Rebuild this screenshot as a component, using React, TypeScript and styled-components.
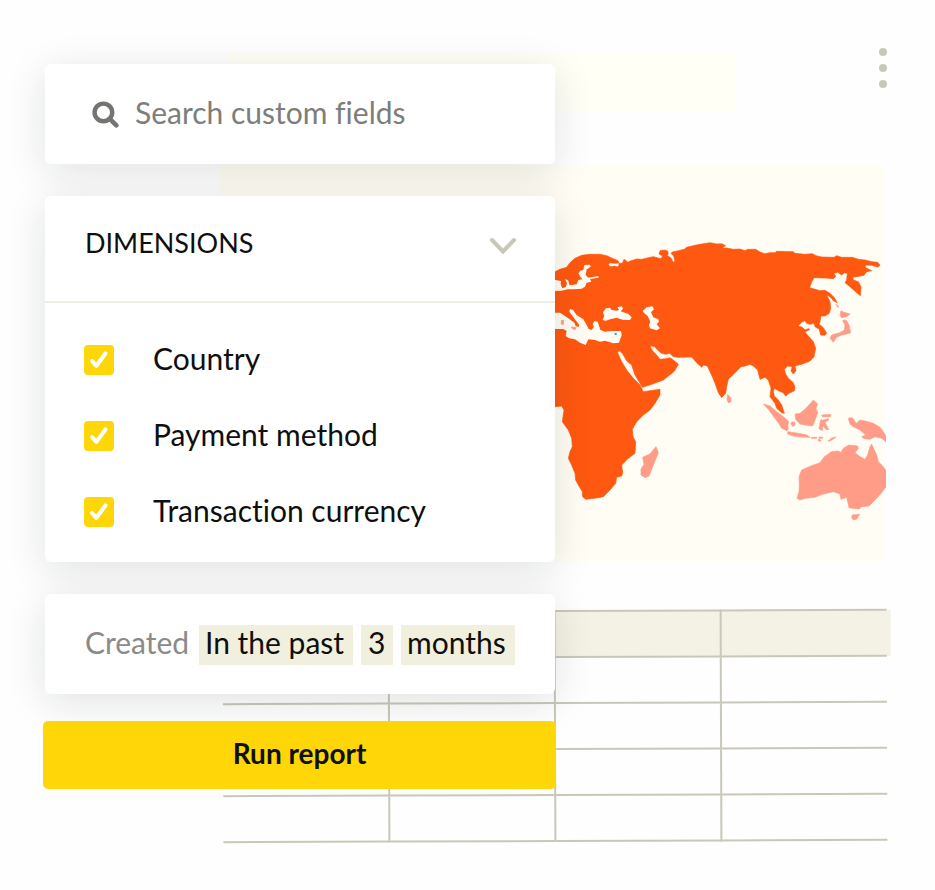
import React, { useState } from "react";
import styled, { createGlobalStyle } from "styled-components";

const colors = {
  ink: "#0f0f0f",
  muted: "#7d7d7a",
  line: "#c9c8b8",
  sand: "#f1efdd",
  header: "#f4f2e4",
  cream: "#fffdf4",
  yellow: "#ffd608",
  orange: "#ff5810",
  pink: "#ff9c88",
};

const GlobalStyle = createGlobalStyle`
  *, *::before, *::after { box-sizing: border-box; }
  body {
    margin: 0;
    background: #fefefe;
    color: ${colors.ink};
    font-family: Lato, "Liberation Sans", sans-serif;
    font-size: 30px;
    font-variant-ligatures: none;
    line-height: 40px;
  }
  button, input, select { font: inherit; font-variant-ligatures: none; color: inherit; }
`;

const Stage = styled.main`
  display: grid;
  grid-template-columns: minmax(0, 1fr);
  align-items: start;
`;

const Report = styled.section`
  grid-area: 1 / 1;
  padding: 48px 48px 48px 220px;
`;

const ReportHeader = styled.header`
  display: flex;
  justify-content: space-between;
  align-items: flex-start;
  gap: 24px;
  padding-left: 8px;
  margin-bottom: 54px;
`;

const TitlePlaceholder = styled.div`
  flex: 0 1 508px;
  height: 60px;
  margin-top: 3px;
  background: #fffff6;
`;

const IconButton = styled.button`
  display: flex;
  padding: 0;
  border: 0;
  background: none;
  cursor: pointer;
`;

const MapFrame = styled.figure`
  margin: 0 3px 49px 0;
  background: ${colors.cream};
`;

const MapDrawing = styled.svg`
  display: block;
  width: calc(100% + 2px);
  height: 396px;
`;

const ReportTable = styled.table`
  width: 100%;
  table-layout: fixed;
  border-collapse: collapse;
  transform: rotate(-0.2deg);
`;

const TableWrap = styled.div`
  padding-left: 3px;
`;

const cellBorders = `
  height: 46px;
  padding: 0;
  border: 2px solid ${colors.line};
  &:first-child { border-left: 0; }
  &:last-child { border-right: 0; }
`;

const HeadCell = styled.th`
  ${cellBorders}
  background: ${colors.header};
  &:last-child { box-shadow: 4px 0 0 ${colors.header}; }
`;

const Cell = styled.td`
  ${cellBorders}
`;

const Filters = styled.form`
  grid-area: 1 / 1;
  z-index: 1;
  display: flex;
  flex-direction: column;
  gap: 32px;
  width: 100%;
  max-width: 600px;
  padding: 64px 45px 48px;
`;

const Card = styled.section`
  border-radius: 6px;
  background: #fff;
  box-shadow: 0 8px 40px rgba(20, 24, 24, 0.12);
`;

const SearchCard = styled(Card)`
  display: flex;
  align-items: center;
  gap: 16px;
  height: 100px;
  padding: 0 40px 0 47px;
`;

const SearchInput = styled.input`
  flex: 1;
  min-width: 0;
  padding: 0 0 4px;
  border: 0;
  outline: 0;
  background: none;
  &::placeholder { color: ${colors.muted}; opacity: 1; }
`;

const GroupHeader = styled.header`
  display: flex;
  justify-content: space-between;
  align-items: center;
  height: 107px;
  padding: 0 38px 12px 40px;
  border-bottom: 2px solid #efeee4;
`;

const GroupTitle = styled.h2`
  margin: 0;
  font-size: 27px;
  font-weight: 400;
`;

const OptionList = styled.div`
  display: flex;
  flex-direction: column;
  gap: 36px;
  padding: 35px 39px 32px;
`;

const Option = styled.label`
  display: flex;
  align-items: center;
  gap: 39px;
  cursor: pointer;
`;

const BoxWrap = styled.span`
  display: grid;
  place-items: center;
  margin-top: 4px;
  > * { grid-area: 1 / 1; }
  > svg { pointer-events: none; }
`;

const CheckBox = styled.input`
  appearance: none;
  width: 30px;
  height: 30px;
  margin: 0;
  border-radius: 4px;
  border: 2px solid ${colors.yellow};
  &:checked { background: ${colors.yellow}; }
`;

const RangeCard = styled(Card)`
  display: flex;
  align-items: center;
  gap: 8px;
  height: 100px;
  padding: 2px 40px 0;
`;

const RangeLabel = styled.span`
  width: 106px;
  padding-bottom: 6px;
  color: #8a8a87;
`;

const chip = `
  height: 40px;
  margin: 0;
  border: 0;
  border-radius: 0;
  background: ${colors.sand};
  line-height: 34px;
`;

const ChipSelect = styled.select<{ $grow: number }>`
  ${chip}
  appearance: none;
  flex: ${(p) => p.$grow} 1 0;
  min-width: 0;
  padding: 0 6px 6px;
`;

const ChipInput = styled.input`
  ${chip}
  width: 32px;
  padding: 0 7px 6px;
`;

const RunButton = styled.button`
  height: 68px;
  margin: -5px -1px 0 -2px;
  padding: 0 0 4px;
  border: 0;
  border-radius: 5px;
  background: ${colors.yellow};
  font-size: 28px;
  font-weight: 700;
  cursor: pointer;
`;

const mainland =
  "M-60 128L30 125 45 118 65 112 75 98 90 85 110 76 135 73 165 73 185 77 200 84 219 92 222 99 207 100 195 98 190 103 195 110 210 108 216 111 222 107 222 100 232 100 237 88 245 93 248 97 256 93 275 87 290 88 310 83 325 80 340 84 348 86 353 78 342 72 345 62 358 60 368 63 370 72 366 76 378 84 384 97 390 92 386 78 378 70 382 66 400 62 418 58 425 52 450 46 470 42 495 38 515 42 530 41 542 47 536 51 531 55 545 54 565 58 585 57 600 62 608 58 632 58 645 66 658 71 675 68 690 68 695 64 745 65 750 70 780 73 802 71 813 77 830 81 867 82 875 77 890 82 922 82 940 88 960 90 980 95 998 97 1005 106 998 111 980 106 962 105 960 112 980 122 965 125 957 136 945 138 935 140 923 142 925 150 940 155 948 170 946 197 935 188 915 170 900 158 905 150 907 130 898 128 890 135 878 127 867 130 872 140 865 146 840 144 808 143 800 155 794 173 810 178 825 182 840 181 855 190 868 203 877 218 865 212 855 200 845 195 855 215 857 235 853 250 840 258 828 258 825 275 822 282 835 293 845 310 840 316 827 315 823 298 810 290 807 280 795 283 785 280 780 272 770 276 760 288 772 292 780 300 790 296 795 298 780 306 790 318 805 335 812 355 807 380 795 393 772 402 750 408 753 422 745 432 738 422 742 410 728 408 718 418 722 432 730 445 745 458 750 472 748 482 732 490 722 498 715 488 700 482 688 475 685 485 688 498 700 510 710 525 718 550 710 548 695 535 690 520 675 500 678 475 670 450 660 442 645 448 638 420 625 408 615 403 600 408 588 410 570 428 550 448 545 470 542 490 530 503 520 488 510 460 502 440 495 425 487 408 475 405 470 412 455 398 440 381 400 382 385 380 374 370 362 373 350 370 340 362 330 351 320 347 316 352 325 365 335 375 345 388 362 386 375 383 385 390 400 403 388 424 355 450 320 463 292 472 285 460 270 435 260 405 245 392 232 370 222 362 218 368 230 395 245 420 265 445 285 465 295 485 345 478 345 495 330 520 315 540 295 555 275 575 262 598 264 620 272 635 270 670 250 685 230 705 233 728 230 738 215 742 212 760 195 780 175 800 155 804 122 808 113 800 112 785 100 765 92 750 90 730 80 705 70 685 75 665 82 650 80 625 70 600 52 575 57 540 50 528 35 530 -60 530Z";

const seas = [
  "M-60 249L45 248 60 258 72 266 88 278 92 288 100 291 103 286 98 278 85 262 73 245 75 237 84 240 95 255 115 268 125 285 131 297 140 300 147 290 143 283 148 273 158 275 163 290 166 300 180 305 200 303 228 303 230 315 222 338 205 340 180 332 165 335 150 330 130 328 122 345 105 338 90 328 72 325 62 318 65 303 55 297 -60 297Z",
  "M118 105L135 104 137 110 125 118 122 135 130 143 160 138 161 143 135 147 139 155 125 158 120 170 110 176 85 178 68 178 50 182 -60 186 -60 148 30 150 48 153 47 162 52 175 62 171 66 160 60 148 69 150 74 166 95 163 100 150 112 148 106 140 100 130 106 122 115 120Z",
  "M183 235L195 233 200 240 215 242 222 240 217 232 231 229 234 236 227 244 250 252 260 262 255 270 235 270 215 263 195 268 183 272 172 270 178 258 174 247Z",
  "M293 243L305 232 322 229 327 238 318 247 325 262 340 268 342 275 335 283 345 295 335 301 315 295 312 285 316 275 308 258 298 250Z",
];

const islands = [
  "M49 271L56 271 55 284 49 282Z",
  "M78 291L94 292 91 299 83 297Z",
  "M873 223L882 230 878 232Z",
  "M888 242L895 246 915 252 905 260 890 263 885 256Z",
  "M898 270L905 272 912 285 917 308 905 312 890 315 875 322 865 337 855 325 860 315 885 308 898 300 900 285 893 272Z",
  "M333 650L340 668 325 705 312 738 300 743 288 735 288 718 297 703 293 682 315 672 325 660Z",
  "M548 493L558 505 558 516 550 518 546 508Z",
  "M655 522L675 528 695 545 715 560 732 575 728 585 730 598 725 602 710 595 700 578 685 558 670 538Z",
  "M737 580L743 575 750 578 750 586 742 589Z",
  "M728 605L760 610 785 615 795 622 770 621 745 618 728 612Z",
  "M805 510L818 522 813 535 818 548 810 570 803 588 785 586 765 582 752 568 750 552 765 550 780 538 795 522Z",
  "M830 556L838 554 858 554 856 560 832 560Z",
  "M828 568L833 571 850 566 850 571 840 577 851 599 842 598 834 585 832 602 822 596 825 580Z",
  "M799 622L815 622 815 625 799 625ZM820 628L828 631 826 634 820 632ZM822 621L834 622 832 625 822 625ZM849 633L860 624 873 621 864 628 852 634Z",
  "M910 565L922 563 930 575 935 580 945 570 960 573 985 580 1005 592 1015 605 1023 618 1023 635 1010 625 990 620 975 628 955 625 950 620 962 615 945 600 925 590 915 582Z",
  "M980 642L987 658 995 675 1000 695 1015 710 1023 722 1023 770 1010 788 990 810 972 828 950 830 942 837 912 833 908 815 905 802 888 808 885 792 865 785 835 792 810 802 780 805 765 810 756 805 762 785 763 765 762 740 770 720 800 707 825 698 838 680 860 665 878 663 888 667 895 655 912 645 938 648 940 655 930 668 945 680 960 688 968 675 975 650Z",
  "M922 855L944 853 935 867 925 870 920 863Z",
];

function WorldMap() {
  return (
    <MapDrawing viewBox="-975 -195 1998 1188" preserveAspectRatio="xMaxYMid slice" role="img" aria-label="World map">
      <g strokeLinejoin="round" strokeWidth="2">
        <path d={mainland} fill={colors.orange} stroke={colors.orange} />
        {seas.map((d) => (
          <path key={d} d={d} fill={colors.cream} />
        ))}
        {islands.map((d) => (
          <path key={d} d={d} fill={colors.pink} stroke={colors.pink} />
        ))}
        <ellipse cx="212" cy="312" rx="4" ry="3" fill="#3a9fb0" />
      </g>
    </MapDrawing>
  );
}

function SearchIcon() {
  return (
    <svg width="27" height="27" viewBox="0 0 27 27" fill="none" stroke="#747471" strokeWidth="4.4" aria-hidden="true">
      <circle cx="11.4" cy="11.4" r="8.8" />
      <path d="M17.8 17.8L24.3 24.3" strokeLinecap="round" strokeWidth="4.6" />
    </svg>
  );
}

function CheckMark() {
  return (
    <svg width="20" height="20" viewBox="0 0 20 20" fill="none" stroke="#fff" strokeWidth="4" aria-hidden="true">
      <path d="M3 11L7.4 15.8 16.5 3.4" strokeLinecap="round" strokeLinejoin="round" />
    </svg>
  );
}

function DimensionOption({ label }: { label: string }) {
  const [checked, setChecked] = useState(true);
  return (
    <Option>
      <BoxWrap>
        <CheckBox type="checkbox" checked={checked} onChange={() => setChecked(!checked)} />
        {checked && <CheckMark />}
      </BoxWrap>
      {label}
    </Option>
  );
}

const columns = [0, 1, 2, 3];
const rows = [0, 1, 2, 3];

export default function App() {
  return (
    <>
      <GlobalStyle />
      <Stage>
        <Report aria-label="Report">
          <ReportHeader>
            <TitlePlaceholder />
            <IconButton type="button" aria-label="More options">
              <svg width="8" height="40" viewBox="0 0 8 40" fill={colors.line} aria-hidden="true">
                <circle cx="4" cy="4" r="4" />
                <circle cx="4" cy="20" r="4" />
                <circle cx="4" cy="36" r="4" />
              </svg>
            </IconButton>
          </ReportHeader>
          <MapFrame>
            <WorldMap />
          </MapFrame>
          <TableWrap>
            <ReportTable>
              <thead>
                <tr>
                  {columns.map((c) => (
                    <HeadCell key={c} scope="col" />
                  ))}
                </tr>
              </thead>
              <tbody>
                {rows.map((r) => (
                  <tr key={r}>
                    {columns.map((c) => (
                      <Cell key={c} />
                    ))}
                  </tr>
                ))}
              </tbody>
            </ReportTable>
          </TableWrap>
        </Report>

        <Filters onSubmit={(e) => e.preventDefault()}>
          <SearchCard>
            <SearchIcon />
            <SearchInput type="text" placeholder="Search custom fields" aria-label="Search custom fields" />
          </SearchCard>

          <Card>
            <GroupHeader>
              <GroupTitle>DIMENSIONS</GroupTitle>
              <IconButton type="button" aria-label="Toggle dimensions">
                <svg width="28" height="22" viewBox="0 0 28 22" fill="none" stroke={colors.line} strokeWidth="4" aria-hidden="true">
                  <path d="M3 8L14 19.5 25 8" strokeLinecap="round" />
                </svg>
              </IconButton>
            </GroupHeader>
            <OptionList>
              <DimensionOption label="Country" />
              <DimensionOption label="Payment method" />
              <DimensionOption label="Transaction currency" />
            </OptionList>
          </Card>

          <RangeCard>
            <RangeLabel>Created</RangeLabel>
            <ChipSelect $grow={142} aria-label="Period">
              <option>In the past</option>
            </ChipSelect>
            <ChipInput type="text" defaultValue="3" aria-label="Amount" />
            <ChipSelect $grow={102} aria-label="Unit">
              <option>months</option>
            </ChipSelect>
          </RangeCard>

          <RunButton type="submit">Run report</RunButton>
        </Filters>
      </Stage>
    </>
  );
}
